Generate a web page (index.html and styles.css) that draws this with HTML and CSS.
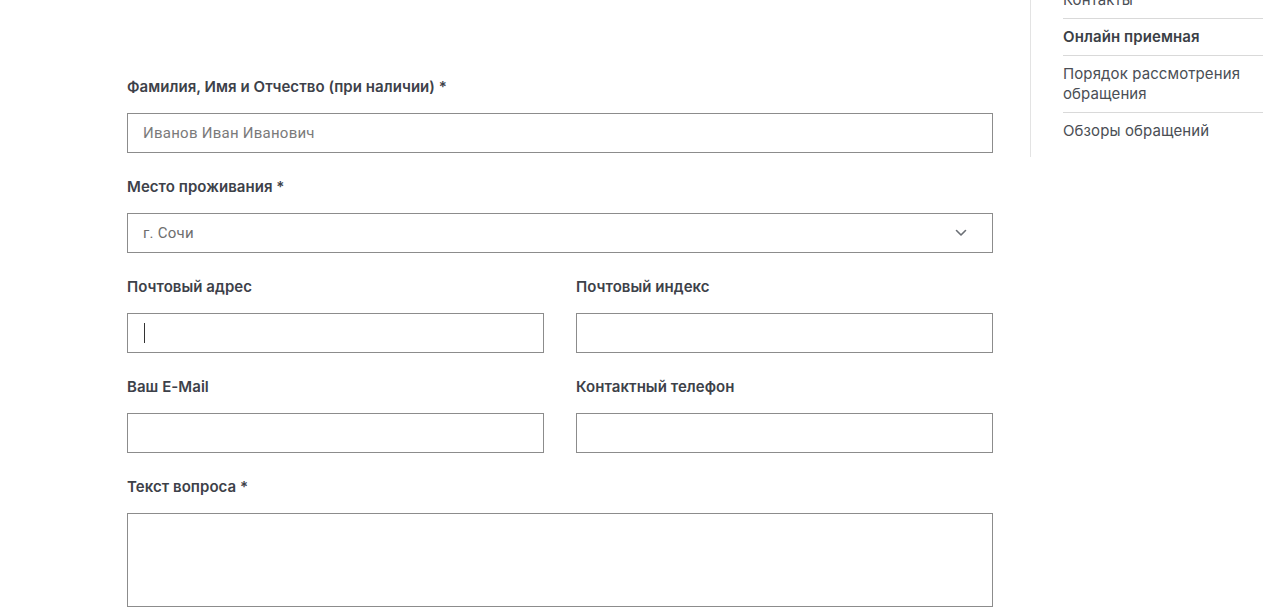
FILE: index.html
```html
<!DOCTYPE html>
<html lang="ru">
<head>
<meta charset="utf-8">
<title>Онлайн приемная</title>
<link rel="stylesheet" href="styles.css">
</head>
<body>
<div class="page">
  <form class="form">
    <div class="field">
      <label class="label">Фамилия, Имя и Отчество (при наличии) *</label>
      <input class="input" type="text" placeholder="Иванов Иван Иванович">
    </div>
    <div class="field">
      <label class="label">Место проживания *</label>
      <div class="select">
        <span class="select-value">г. Сочи</span>
        <svg class="chevron" width="12" height="8" viewBox="0 0 12 8"><path d="M1.5 1.5 L6 6 L10.5 1.5" fill="none" stroke="#6b6f75" stroke-width="1.6" stroke-linecap="round" stroke-linejoin="round"/></svg>
      </div>
    </div>
    <div class="row">
      <div class="field">
        <label class="label">Почтовый адрес</label>
        <div class="input-wrap">
          <input class="input" type="text">
          <span class="caret"></span>
        </div>
      </div>
      <div class="field">
        <label class="label">Почтовый индекс</label>
        <input class="input" type="text">
      </div>
    </div>
    <div class="row">
      <div class="field">
        <label class="label">Ваш E-Mail</label>
        <input class="input" type="text">
      </div>
      <div class="field">
        <label class="label">Контактный телефон</label>
        <input class="input" type="text">
      </div>
    </div>
    <div class="field">
      <label class="label">Текст вопроса *</label>
      <textarea class="textarea"></textarea>
    </div>
  </form>
  <aside class="aside">
    <ul class="menu">
      <li class="menu-item">Контакты</li>
      <li class="menu-item active">Онлайн приемная</li>
      <li class="menu-item">Порядок рассмотрения обращения</li>
      <li class="menu-item">Обзоры обращений</li>
    </ul>
  </aside>
</div>
</body>
</html>
```
FILE: styles.css
```css
* { box-sizing: border-box; }
html, body { margin: 0; padding: 0; background: #fff; }
body {
  font-family: Inter, "Noto Sans", Arial, sans-serif;
  color: #3b3f46;
  overflow: hidden;
}
.page {
  display: flex;
  align-items: flex-start;
  padding-left: 127px;
  gap: 37px;
}
.form {
  width: 866px;
  padding-top: 77px;
  display: flex;
  flex-direction: column;
  gap: 24px;
}
.field {
  display: flex;
  flex-direction: column;
  gap: 16px;
  flex: 1;
}
.row {
  display: flex;
  gap: 32px;
}
.label {
  font-size: 15px;
  font-weight: 600;
  line-height: 20px;
  color: #3d4149;
  letter-spacing: 0.05px;
}
.input, .select, .textarea {
  display: block;
  width: 100%;
  height: 40px;
  border: 1px solid #8c8c8c;
  border-radius: 0;
  background: #fff;
  padding: 0 15px;
  font-family: Roboto, Arial, sans-serif;
  font-size: 15px;
  letter-spacing: 0.25px;
  color: #333;
  outline: none;
  margin: 0;
}
.input::placeholder { color: #7a7a7a; }
.input-wrap { position: relative; }
.caret {
  position: absolute;
  left: 17px;
  top: 10px;
  width: 1px;
  height: 20px;
  background: #333;
}
.select {
  display: flex;
  align-items: center;
  justify-content: space-between;
  padding-right: 25px;
}
.select-value { color: #6e6e6e; }
.chevron { display: block; }
.textarea {
  height: 94px;
  resize: none;
}
.aside {
  margin-top: -18px;
  width: 234px;
  border-left: 1px solid #e3e3e3;
  padding-left: 32px;
  padding-bottom: 8px;
}
.menu {
  list-style: none;
  margin: 0;
  padding: 0;
  width: 200px;
}
.menu-item {
  font-size: 15px;
  line-height: 20px;
  padding: 8px 0;
  color: #4a4e55;
  border-bottom: 1px solid #d9d9d9;
  letter-spacing: 0.1px;
}
.menu-item:last-child { border-bottom: none; }
.menu-item.active { font-weight: 600; color: #3b3f46; }
```
